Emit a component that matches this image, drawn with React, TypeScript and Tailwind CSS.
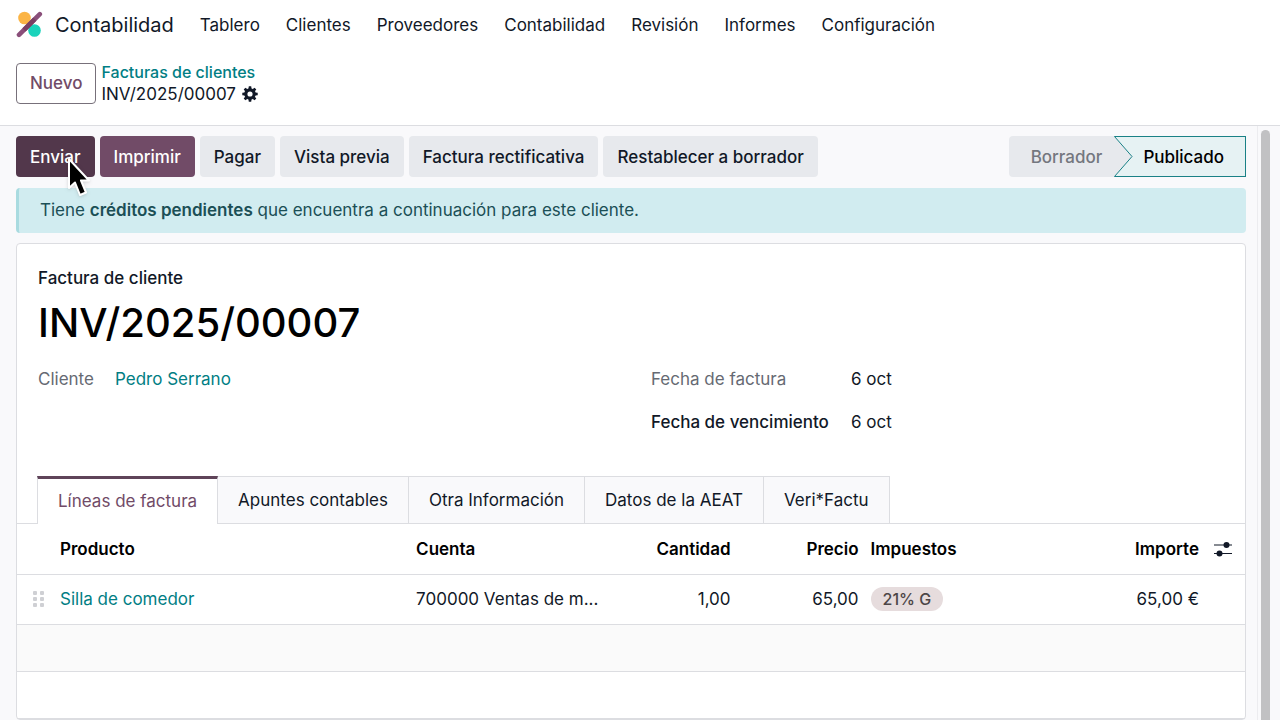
import React, { useState } from "react";

const menu = [
  "Tablero",
  "Clientes",
  "Proveedores",
  "Contabilidad",
  "Revisión",
  "Informes",
  "Configuración",
];

const actions = [
  "Pagar",
  "Vista previa",
  "Factura rectificativa",
  "Restablecer a borrador",
];

const tabs = [
  "Líneas de factura",
  "Apuntes contables",
  "Otra Información",
  "Datos de la AEAT",
  "Veri*Factu",
];

const Logo: React.FC = () => (
  <svg width="28" height="28" viewBox="0 0 28 28" aria-hidden="true">
    <circle cx="8.5" cy="7" r="6.3" fill="#fbb445" />
    <circle cx="18.5" cy="19.5" r="6.3" fill="#1ad3bb" />
    <path d="M3 23.8 23.8 3.2" stroke="#8a4f7a" strokeWidth="4.6" strokeLinecap="round" />
    <path d="M8 18.8 18.8 8.2" stroke="#7a3f63" strokeWidth="4.6" />
  </svg>
);

const Gear: React.FC = () => (
  <svg width="16" height="16" viewBox="-8 -8 16 16" aria-hidden="true">
    <circle r="4.2" fill="none" stroke="#111827" strokeWidth="3.2" />
    {[0, 45, 90, 135].map((angle) => (
      <path
        key={angle}
        d="M-1.6-5h3.2l-.4-2.7h-2.4zM-1.6 5h3.2l-.4 2.7h-2.4z"
        fill="#111827"
        transform={`rotate(${angle})`}
      />
    ))}
  </svg>
);

const Pointer: React.FC = () => (
  <svg
    className="absolute left-[51px] top-[20px] z-10 pointer-events-none drop-shadow"
    width="24"
    height="42"
    viewBox="0 0 24 42"
    aria-hidden="true"
  >
    <path
      d="M2 3v29l6-5.5 5 12.5 6-2.5-5-12h8z"
      fill="#000"
      stroke="#fff"
      strokeWidth="2"
      strokeLinejoin="round"
    />
  </svg>
);

const Header: React.FC = () => (
  <header className="bg-white border-b border-[#dcdde1] px-4 pb-5">
    <nav className="flex items-center h-[50px]">
      <Logo />
      <a href="#" className="ml-[11px] mr-[13px] text-xl">
        Contabilidad
      </a>
      <ul className="flex">
        {menu.map((item) => (
          <li key={item}>
            <a href="#" className="block px-[13px]">
              {item}
            </a>
          </li>
        ))}
      </ul>
    </nav>
    <div className="flex items-center gap-[5px] pt-[11px]">
      <button className="h-[41px] px-[13px] border border-[#77707a] rounded font-medium text-[#714b67]">
        Nuevo
      </button>
      <div className="leading-[22px]">
        <a href="#" className="block text-base leading-[22px] font-medium text-[#017e84]">
          Facturas de clientes
        </a>
        <div className="flex items-center gap-[6px]">
          <span>INV/2025/00007</span>
          <button aria-label="Acciones">
            <Gear />
          </button>
        </div>
      </div>
    </div>
  </header>
);

const StatusBar: React.FC = () => (
  <div className="flex h-[41px] font-medium">
    <button className="pl-[22px] pr-3 bg-[#e7e9ed] rounded-l text-[#74777f]">
      Borrador
    </button>
    <button className="relative pl-[29px] pr-[21px] bg-[#e6f2f3] border border-l-0 border-[#1a8186] text-black">
      <svg
        className="absolute left-0 -top-px"
        width="19"
        height="41"
        viewBox="0 0 19 41"
        fill="none"
        aria-hidden="true"
      >
        <path d="M0 0 18 20.5 0 41z" fill="#e7e9ed" />
        <path d="M.5.5 18 20.5.5 40.5" stroke="#1a8186" />
      </svg>
      Publicado
    </button>
  </div>
);

const OptionsIcon: React.FC = () => (
  <svg width="18" height="16" viewBox="0 0 18 16" fill="#111827" aria-hidden="true">
    <path d="M0 3.5h18v1H0zM0 12h18v1H0z" />
    <circle cx="12.5" cy="4" r="3" />
    <circle cx="5.5" cy="12.5" r="3" />
  </svg>
);

const DragHandle: React.FC = () => (
  <svg width="11" height="17" viewBox="0 0 11 17" fill="#cfd0d4" aria-hidden="true">
    {[0, 6, 12].map((y) => (
      <React.Fragment key={y}>
        <rect x="0" y={y} width="4" height="4" rx="1" />
        <rect x="7" y={y} width="4" height="4" rx="1" />
      </React.Fragment>
    ))}
  </svg>
);

const InvoiceLines: React.FC = () => (
  <table className="w-full table-fixed">
    <thead>
      <tr className="h-[50px] border-b border-[#dcdde1] text-black">
        <th className="w-[37px]"></th>
        <th className="w-[29%] px-[6px] text-left font-semibold">Producto</th>
        <th className="w-[16%] px-[6px] text-left font-semibold">Cuenta</th>
        <th className="w-[130px] px-[6px] text-right font-semibold">Cantidad</th>
        <th className="w-[128px] px-[6px] text-right font-semibold">Precio</th>
        <th className="px-[6px] text-left font-semibold">Impuestos</th>
        <th className="w-[130px] px-[6px] text-right font-semibold">Importe</th>
        <th className="w-[40px] pl-[9px]">
          <button aria-label="Columnas opcionales" className="block">
            <OptionsIcon />
          </button>
        </th>
      </tr>
    </thead>
    <tbody>
      <tr className="h-[50px] border-b border-[#dcdde1]">
        <td className="pl-4">
          <DragHandle />
        </td>
        <td className="px-[6px]">
          <a href="#" className="text-[#017e84]">
            Silla de comedor
          </a>
        </td>
        <td className="px-[6px] whitespace-nowrap">700000 Ventas de m...</td>
        <td className="px-[6px] text-right">1,00</td>
        <td className="px-[6px] text-right">65,00</td>
        <td className="px-[6px]">
          <span className="block w-fit px-3 rounded-full bg-[#e6dcdd] text-base leading-6 font-medium text-[#4c4647]">
            21% G
          </span>
        </td>
        <td className="px-[6px] text-right">65,00 €</td>
        <td></td>
      </tr>
      <tr className="h-[47px] border-b border-[#dcdde1] bg-[#fafafa]">
        <td colSpan={8}></td>
      </tr>
      <tr className="h-[47px] border-b border-[#dcdde1]">
        <td colSpan={8}></td>
      </tr>
    </tbody>
  </table>
);

const App: React.FC = () => {
  const [tab, setTab] = useState(0);

  return (
    <div className="flex flex-col h-screen overflow-hidden bg-[#f9f9fb] font-['Inter','Liberation_Sans',sans-serif] text-[17px] leading-6 text-[#111827]">
      <Header />
      <div className="flex flex-1 min-h-0">
        <main className="flex-1 min-w-0 overflow-hidden pl-4 pr-[11px] pt-[10px] border-r border-[#ececef]">
          <div className="flex justify-between">
            <div className="flex gap-[5px] font-medium">
              <button className="relative h-[41px] px-[14px] rounded bg-[#52374b] text-white">
                Enviar
                <Pointer />
              </button>
              <button className="h-[41px] px-[14px] rounded bg-[#714b67] text-white">
                Imprimir
              </button>
              {actions.map((action) => (
                <button
                  key={action}
                  className="h-[41px] px-[14px] rounded bg-[#e7e9ed]"
                >
                  {action}
                </button>
              ))}
            </div>
            <StatusBar />
          </div>

          <div
            role="alert"
            className="mt-[11px] py-[11px] px-[21px] border-l-[3px] border-[#a9dbe0] rounded bg-[#d1ecf0] leading-[23px] text-[#1b4f56]"
          >
            Tiene <b className="font-semibold">créditos pendientes</b> que
            encuentra a continuación para este cliente.
          </div>

          <section className="mt-[10px] border border-[#dcdde1] rounded bg-white">
            <div className="px-[21px] pt-[22px]">
              <p className="font-medium">Factura de cliente</p>
              <h1 className="mt-2 text-[40px] leading-[50px] font-medium text-black">
                INV/2025/00007
              </h1>
              <div className="grid grid-cols-2 gap-x-10 mt-[19px]">
                <dl className="flex h-6">
                  <dt className="w-[77px] text-[#666a73]">Cliente</dt>
                  <dd>
                    <a href="#" className="text-[#017e84]">
                      Pedro Serrano
                    </a>
                  </dd>
                </dl>
                <dl className="grid grid-cols-[200px_1fr] gap-y-[19px]">
                  <dt className="text-[#666a73]">Fecha de factura</dt>
                  <dd>6 oct</dd>
                  <dt className="font-medium">Fecha de vencimiento</dt>
                  <dd>6 oct</dd>
                </dl>
              </div>
            </div>

            <div
              role="tablist"
              className="flex px-5 mt-[42px] border-b border-[#dcdde1]"
            >
              {tabs.map((name, i) => (
                <button
                  key={name}
                  role="tab"
                  aria-selected={tab === i}
                  onClick={() => setTab(i)}
                  className={
                    tab === i
                      ? "h-12 -mb-px px-5 pb-[2px] border-x border-t-3 border-x-[#dcdde1] border-t-[#5f4459] bg-white text-[#714b67]"
                      : "h-[47px] px-5 border-r border-t border-[#dcdde1] bg-[#f9f9fb]"
                  }
                >
                  {name}
                </button>
              ))}
            </div>
            <InvoiceLines />
          </section>
        </main>
        <div className="w-[22px] pl-[3px] pt-1">
          <div className="w-[9px] h-full rounded-t-full bg-[#c1c1c3]" />
        </div>
      </div>
    </div>
  );
};

export default App;
